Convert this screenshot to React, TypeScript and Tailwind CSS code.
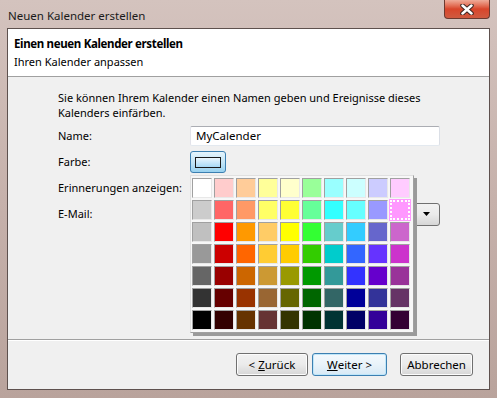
import React from 'react';

const palette = [
  ['#FFFFFF', '#FFCCCC', '#FFCC99', '#FFFF99', '#FFFFCC', '#99FF99', '#99FFFF', '#CCFFFF', '#CCCCFF', '#FFCCFF'],
  ['#CCCCCC', '#FF6666', '#FF9966', '#FFFF66', '#FFFF33', '#66FF99', '#33FFFF', '#66FFFF', '#9999FF', '#FF99FF'],
  ['#C0C0C0', '#FF0000', '#FF9900', '#FFCC66', '#FFFF00', '#33FF33', '#66CCCC', '#33CCFF', '#6666CC', '#CC66CC'],
  ['#999999', '#CC0000', '#FF6600', '#FFCC33', '#FFCC00', '#33CC00', '#00CCCC', '#3366FF', '#6633FF', '#CC33CC'],
  ['#666666', '#990000', '#CC6600', '#CC9933', '#999900', '#009900', '#339999', '#3333FF', '#6600CC', '#993399'],
  ['#333333', '#660000', '#993300', '#996633', '#666600', '#006600', '#336666', '#000099', '#333399', '#663366'],
  ['#000000', '#330000', '#663300', '#663333', '#333300', '#003300', '#003333', '#000066', '#330099', '#330033'],
];

function WinButton({ children, focused, width }: { children: React.ReactNode; focused?: boolean; width: string }) {
  return (
    <button
      className={`${width} h-[23px] rounded-[3px] border text-[11.5px] text-black flex items-center justify-center ${
        focused
          ? 'border-[#3c7fb1] bg-gradient-to-b from-[#f4f9fd] via-[#e9f3fa] to-[#d7e9f5] shadow-[inset_0_0_0_1px_#bfe6f9]'
          : 'border-[#707070] bg-gradient-to-b from-[#f2f2f2] via-[#ebebeb] to-[#d6d6d6] shadow-[inset_0_0_0_1px_#fcfcfc]'
      }`}
    >
      {children}
    </button>
  );
}

export default function App() {
  return (
    <div className="relative w-[497px] h-[398px] overflow-hidden flex flex-col bg-gradient-to-b from-[#d4c3be] via-[#c6b1ab] to-[#b9a39c] font-['Noto_Sans',sans-serif] text-[11px] text-black">
      {/* Title bar */}
      <div className="h-[28px] flex items-start">
        <span className="ml-[8px] mt-[7px] text-[11.5px] text-[#1a1a1a]">Neuen Kalender erstellen</span>
        <div className="ml-auto mr-[7px] w-[46px] h-[19px] rounded-b-[4px] border border-t-0 border-[#6b3a30] bg-gradient-to-b from-[#eeab98] via-[#d8452a] to-[#cf5a40] flex items-center justify-center">
          <svg width="14" height="11" viewBox="0 0 14 11">
            <path d="M2.5 1.5 L11.5 9.5 M11.5 1.5 L2.5 9.5" stroke="#3b2520" strokeWidth="4.5" strokeLinecap="round" />
            <path d="M2.5 1.5 L11.5 9.5 M11.5 1.5 L2.5 9.5" stroke="#ffffff" strokeWidth="2.5" strokeLinecap="round" />
          </svg>
        </div>
      </div>

      {/* Client area */}
      <div className="mx-[7px] mb-[8px] flex-1 border border-[#5e514e] bg-[#f0f0f0] flex flex-col">
        {/* Header */}
        <div className="h-[48px] bg-white border-b border-[#a0a0a0] pl-[6px] pt-[6px] leading-[18px]">
          <div className="font-bold text-[11.5px] tracking-[-0.35px]">Einen neuen Kalender erstellen</div>
          <div>Ihren Kalender anpassen</div>
        </div>

        {/* Body */}
        <div className="flex-1 pl-[50px] pt-[13px]">
          <p className="leading-[15px]">
            Sie können Ihrem Kalender einen Namen geben und Ereignisse dieses
            <br />
            Kalenders einfärben.
          </p>
          <div className="mt-[3px] grid grid-cols-[132px_250px] auto-rows-[26px] items-center">
            <span>Name:</span>
            <div className="h-[20px] border border-[#abadb3] border-r-[#dbdfe6] border-b-[#e3e9ef] border-l-[#e2e3ea] bg-white rounded-[2px] pl-[5px] flex items-center text-[11.5px]">
              MyCalender
            </div>

            <span>Farbe:</span>
            <div className="w-[36px] h-[22px] rounded-[3px] border border-[#3c7fb1] bg-gradient-to-b from-[#e5f4fc] via-[#c4e5f6] to-[#98d1ef] flex items-center justify-center">
              <div className="w-[26px] h-[11px] border border-[#1a1a1a] bg-gradient-to-b from-[#eaf6fd] to-[#a7d9f5]" />
            </div>

            <span className="whitespace-nowrap">Erinnerungen anzeigen:</span>
            <div />

            <span>E-Mail:</span>
            <div className="h-[23px] rounded-[3px] border border-[#707070] bg-gradient-to-b from-[#f2f2f2] via-[#ebebeb] to-[#d6d6d6] flex items-center justify-end pr-[8px]">
              <svg width="8" height="5" viewBox="0 0 8 5">
                <path d="M0 0 H7 L3.5 4 Z" fill="#000" />
              </svg>
            </div>
          </div>
        </div>

        {/* Footer */}
        <div className="h-[50px] border-t border-[#a0a0a0] shadow-[inset_0_1px_0_#ffffff] flex items-start justify-end pt-[13px] pr-[16px]">
          <WinButton width="w-[72px]">
            &lt; <span className="underline ml-[3px]">Z</span>urück
          </WinButton>
          <div className="ml-[4px]">
            <WinButton width="w-[75px]" focused>
              <span className="underline">W</span>eiter &gt;
            </WinButton>
          </div>
          <div className="ml-[13px]">
            <WinButton width="w-[73px]">Abbrechen</WinButton>
          </div>
        </div>
      </div>

      {/* Colour picker popup */}
      <div className="absolute left-[190px] top-[175px] w-[224px] h-[158px] bg-[#f7f7f7] border border-[#e0e0e0] border-r-[#a0a0a0] border-b-[#a0a0a0] shadow-[3px_3px_0_#9a9a9a] pl-[1px] pt-[2px]">
        <div className="grid grid-cols-[repeat(10,20px)] grid-rows-[repeat(7,20px)] gap-[2px]">
          {palette.flat().map((c, i) => (
            <div
              key={i}
              className={
                i === 19
                  ? 'border-2 border-dotted border-white outline outline-1 outline-[#ff99ff]'
                  : 'border border-[#a0a0a0] border-r-[#e8e8e8] border-b-[#e8e8e8]'
              }
              style={{ backgroundColor: c }}
            />
          ))}
        </div>
      </div>
    </div>
  );
}
